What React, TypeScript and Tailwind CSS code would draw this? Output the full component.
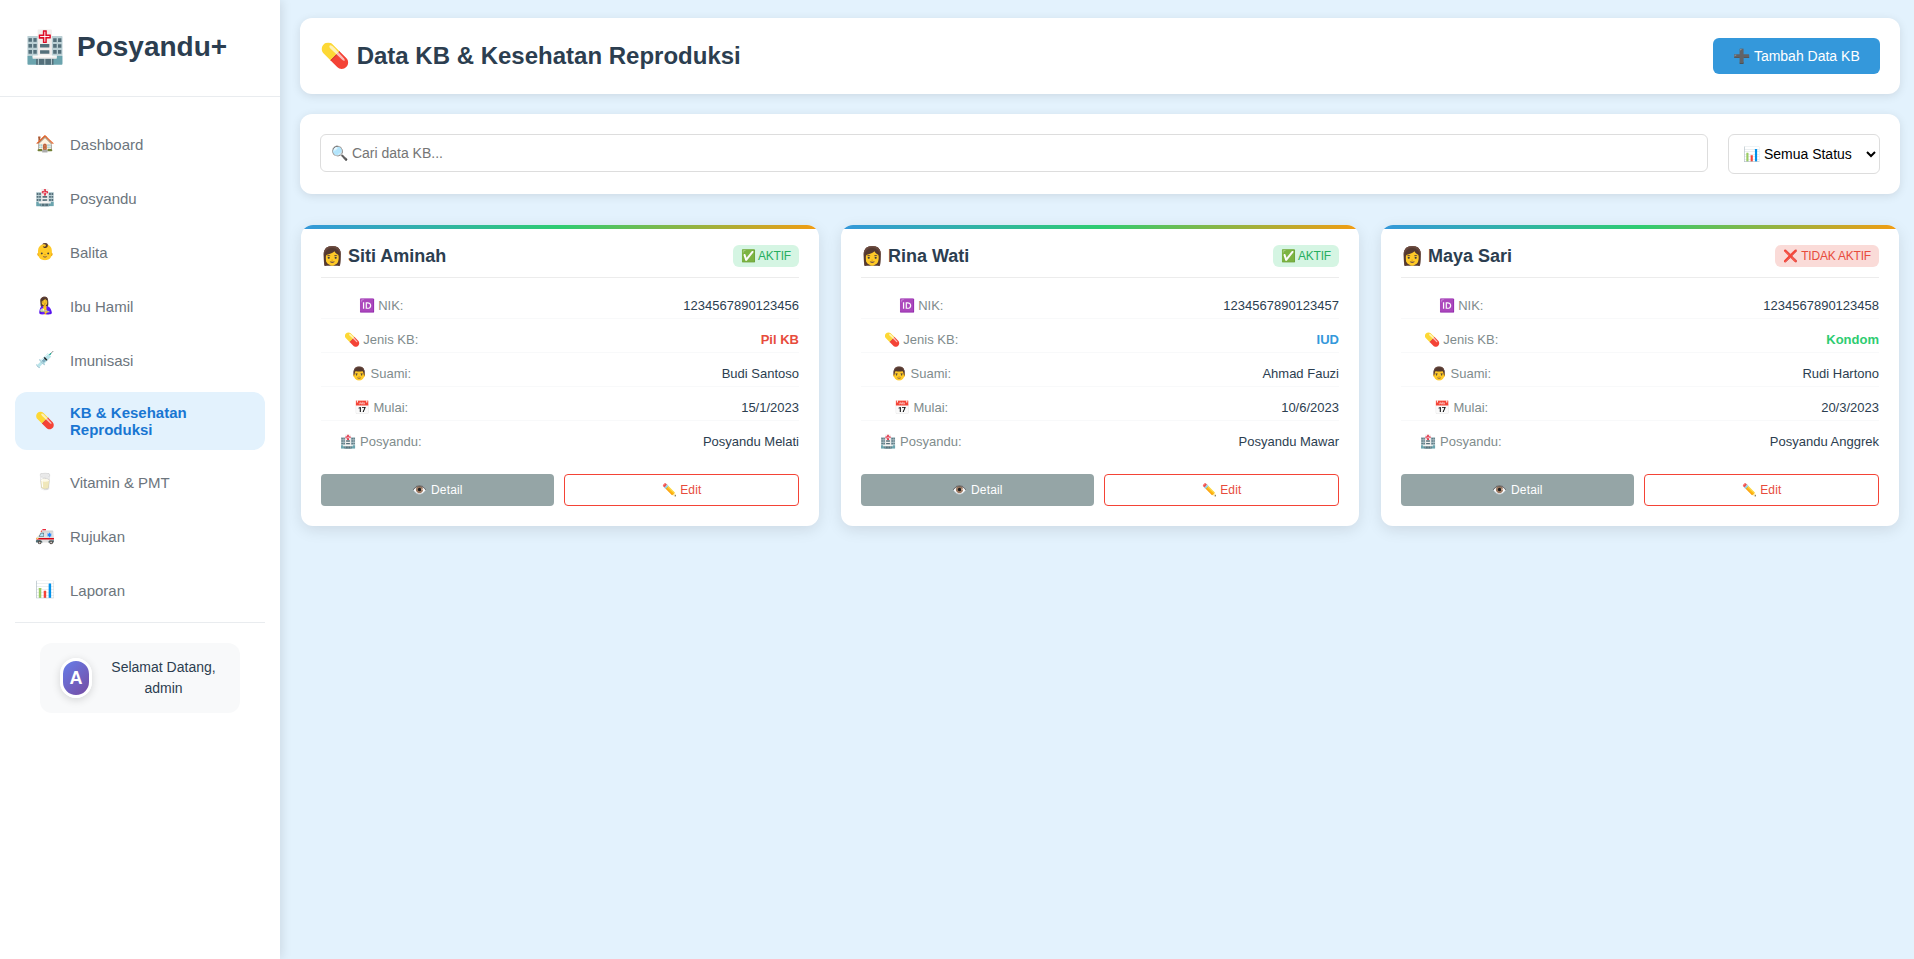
import React from "react";

const nav = [
  ["🏠", "Dashboard"],
  ["🏥", "Posyandu"],
  ["👶", "Balita"],
  ["🤱", "Ibu Hamil"],
  ["💉", "Imunisasi"],
  ["💊", "KB & Kesehatan Reproduksi"],
  ["🥛", "Vitamin & PMT"],
  ["🚑", "Rujukan"],
  ["📊", "Laporan"],
];

const cards = [
  { name: "Siti Aminah", active: true, nik: "1234567890123456", kb: "Pil KB", kbc: "text-[#e74c3c]", suami: "Budi Santoso", mulai: "15/1/2023", pos: "Posyandu Melati" },
  { name: "Rina Wati", active: true, nik: "1234567890123457", kb: "IUD", kbc: "text-[#3498db]", suami: "Ahmad Fauzi", mulai: "10/6/2023", pos: "Posyandu Mawar" },
  { name: "Maya Sari", active: false, nik: "1234567890123458", kb: "Kondom", kbc: "text-[#2ecc71]", suami: "Rudi Hartono", mulai: "20/3/2023", pos: "Posyandu Anggrek" },
];

function Row({ label, value, cls = "font-normal text-[#2c3e50]", last = false }: { label: string; value: string; cls?: string; last?: boolean }) {
  return (
    <div className={`flex h-[26px] items-center justify-between text-[13px] ${last ? "" : "mb-2 border-b border-[#f8f9fa]"}`}>
      <span className="w-[120px] text-center text-[#7f8c8d] whitespace-nowrap">{label}</span>
      <span className={cls}>{value}</span>
    </div>
  );
}

export default function App() {
  return (
    <div className="flex min-h-[959px] bg-[#e3f2fd] font-['Liberation_Sans',Arial,sans-serif]">
      <aside className="w-[280px] shrink-0 bg-white shadow-[2px_0_10px_rgba(0,0,0,0.1)]">
        <div className="flex h-[97px] items-center gap-3 border-b border-[#e9ecef] pl-[25px] pb-[2px]">
          <span className="text-[32px] leading-none">🏥</span>
          <span className="text-[28px] font-bold text-[#2c3e50]">Posyandu+</span>
        </div>
        <nav className="flex flex-col gap-[10px] px-[15px] pt-[25px] pb-[10px]">
          {nav.map(([icon, label]) => {
            const active = label.startsWith("KB");
            return (
              <div
                key={label}
                className={`flex items-center gap-[15px] rounded-xl px-5 py-3 text-[15px] leading-[17px] ${active ? "bg-[#e3f2fd] font-bold text-[#1976d2]" : "text-[#6c757d]"}`}
              >
                <span className="w-5 shrink-0 text-center text-[16px] leading-5">{icon}</span>
                <span>{label}</span>
              </div>
            );
          })}
        </nav>
        <div className="mx-[15px] border-t border-[#e9ecef] px-[25px] pt-5">
          <div className="flex h-[70px] items-center gap-[15px] rounded-xl bg-[#f8f9fa] px-5">
            <div className="flex h-10 w-[32px] shrink-0 items-center justify-center rounded-full border-[3px] border-white bg-[linear-gradient(135deg,#667eea,#764ba2)] text-[18px] font-bold text-white shadow-[0_2px_8px_rgba(0,0,0,0.15)]">
              A
            </div>
            <div className="text-center text-[14px] leading-[21px] text-[#2c3e50]">Selamat Datang, admin</div>
          </div>
        </div>
      </aside>

      <main className="min-w-0 flex-1 pt-[18px] pr-[14px] pl-5">
        <header className="flex h-[76px] items-center justify-between rounded-xl bg-white px-5 shadow-[0_2px_10px_rgba(0,0,0,0.1)]">
          <h1 className="text-[24px] font-bold text-[#2c3e50]">💊 Data KB & Kesehatan Reproduksi</h1>
          <button className="h-9 w-[167px] rounded-md bg-[#3498db] text-[14px] text-white">➕ Tambah Data KB</button>
        </header>

        <section className="mt-5 flex h-[80px] items-start gap-5 rounded-xl bg-white p-5 shadow-[0_2px_10px_rgba(0,0,0,0.1)]">
          <input
            readOnly
            placeholder="🔍 Cari data KB..."
            className="h-[38px] flex-1 rounded-md border border-[#dddddd] bg-white px-[10px] text-[14px] placeholder:text-[#757575]"
          />
          <select className="h-10 w-[152px] rounded-md border border-[#dddddd] bg-white px-[10px] text-[14px] text-black">
            <option>📊 Semua Status</option>
          </select>
        </section>

        <section className="mt-[31px] grid grid-cols-3 gap-[22px] px-[1px]">
          {cards.map((c) => (
            <article key={c.name} className="overflow-hidden rounded-xl bg-white shadow-[0_4px_15px_rgba(0,0,0,0.1)]">
              <div className="h-1 bg-[linear-gradient(90deg,#3498db,#2ecc71,#f39c12)]" />
              <div className="px-5 pt-4 pb-5">
                <div className="flex h-[33px] items-start justify-between border-b border-[#ececec]">
                  <h3 className="text-[18px] leading-[22px] font-bold text-[#2c3e50]">👩 {c.name}</h3>
                  <span className={`rounded-md px-2 py-[3px] text-[12px] leading-4 tracking-[-0.2px] ${c.active ? "bg-[#d5f5e3] text-[#27ae60]" : "bg-[#fadbd8] text-[#e74c3c]"}`}>
                    {c.active ? "✅ AKTIF" : "❌ TIDAK AKTIF"}
                  </span>
                </div>
                <div className="mt-[15px]">
                  <Row label="🆔 NIK:" value={c.nik} />
                  <Row label="💊 Jenis KB:" value={c.kb} cls={`font-bold ${c.kbc}`} />
                  <Row label="👨 Suami:" value={c.suami} />
                  <Row label="📅 Mulai:" value={c.mulai} />
                  <Row label="🏥 Posyandu:" value={c.pos} last />
                </div>
                <div className="mt-[19px] flex gap-[10px]">
                  <button className="h-8 flex-1 rounded bg-[#95a5a6] text-[12px] tracking-[0.15px] text-white">👁️ Detail</button>
                  <button className="h-8 flex-1 rounded border border-[#f44336] bg-white text-[12px] tracking-[0.15px] text-[#e74c3c]">✏️ Edit</button>
                </div>
              </div>
            </article>
          ))}
        </section>
      </main>
    </div>
  );
}
